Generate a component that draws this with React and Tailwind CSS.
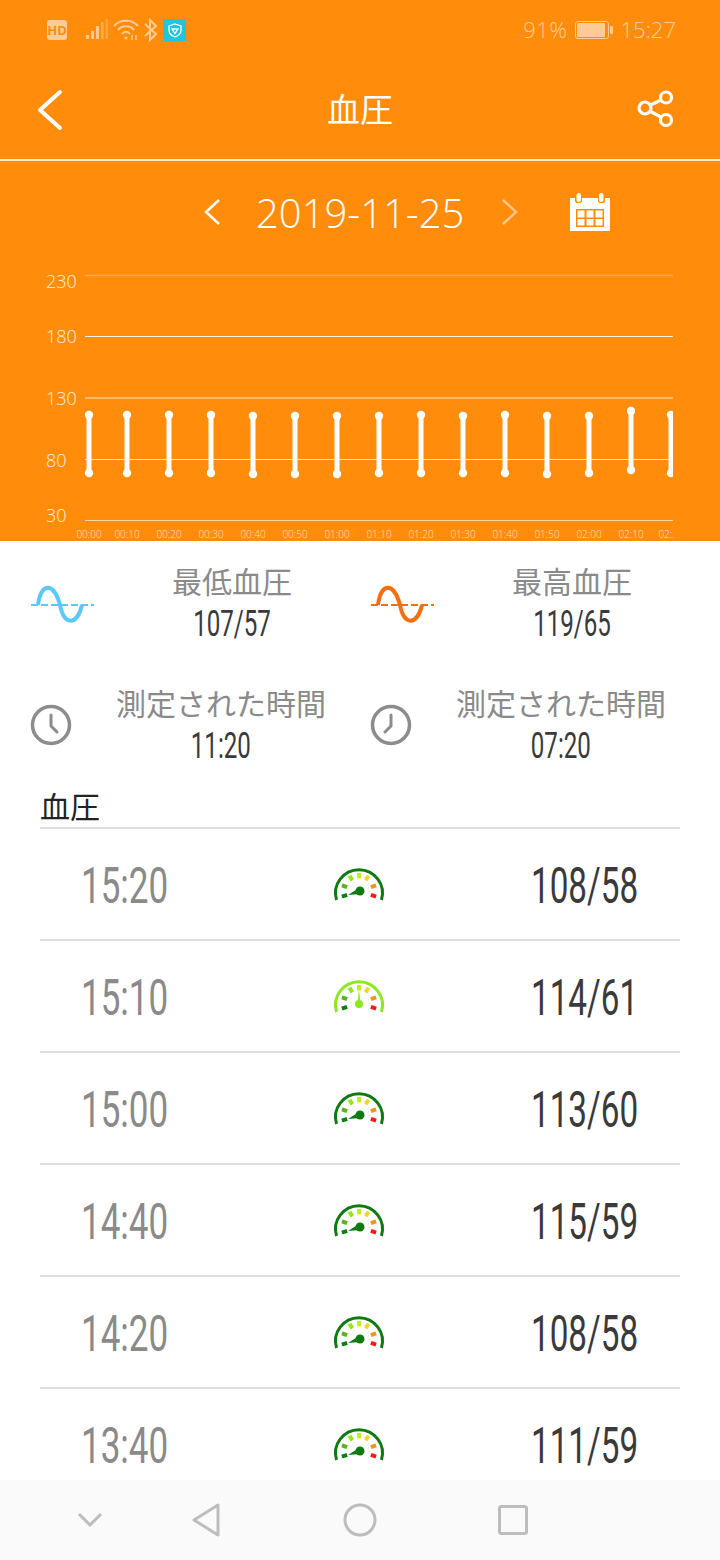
const rows = [
  { time: "15:20", value: "108/58", level: "low" },
  { time: "15:10", value: "114/61", level: "mid" },
  { time: "15:00", value: "113/60", level: "low" },
  { time: "14:40", value: "115/59", level: "low" },
  { time: "14:20", value: "108/58", level: "low" },
  { time: "13:40", value: "111/59", level: "low" },
]

const bars = [
  [89, 415, 473, "00:00"],
  [127, 415, 473, "00:10"],
  [169, 415, 473, "00:20"],
  [211, 415, 473, "00:30"],
  [253, 416, 474, "00:40"],
  [295, 416, 474, "00:50"],
  [337, 416, 474, "01:00"],
  [379, 416, 473, "01:10"],
  [421, 415, 473, "01:20"],
  [463, 416, 473, "01:30"],
  [505, 415, 473, "01:40"],
  [547, 416, 474, "01:50"],
  [589, 416, 473, "02:00"],
  [631, 411, 470, "02:10"],
  [671, 415, 473, "02:20"],
]

const tickColors = ["#0f7a12", "#4fb81e", "#8fe81e", "#c3ee1e", "#f5d51e", "#f5921e", "#ee1c1c"]
const tickAngles = [-108, -72, -32, 0, 32, 72, 108]

function Gauge({ level }) {
  const color = level === "mid" ? "#8de81e" : "#0f7a12"
  return (
    <svg width="50" height="36" viewBox="0 0 50 36" fill="none" className="block overflow-visible">
      <path d="M2.5 33 A23.5 23.5 0 1 1 47.5 33" stroke={color} strokeWidth="3" />
      {tickAngles.map((a, i) => (
        <line key={a} x1="25" y1="6" x2="25" y2="11.5" stroke={tickColors[i]} strokeWidth="4" transform={`rotate(${a} 25 24)`} />
      ))}
      {level === "mid" ? (
        <>
          <circle cx="25" cy="25" r="4" fill={color} />
          <path d="M23.5 25 L25 10 L26.5 25 Z" fill={color} />
        </>
      ) : (
        <>
          <circle cx="26" cy="24" r="4.5" fill={color} />
          <path d="M25 21 L14 28 L26 27 Z" fill={color} />
        </>
      )}
    </svg>
  )
}

function Wave({ color }) {
  return (
    <svg width="64" height="40" viewBox="0 0 64 40" fill="none" className="shrink-0 mt-1">
      <path d="M8 20 C11 -3 24 -3 30 20 C34 41 47 41 52 20" stroke={color} strokeWidth="4" />
      <path d="M1 20 H64" stroke={color} strokeWidth="2" strokeDasharray="7 3" />
    </svg>
  )
}

function Clock({ hands }) {
  return (
    <svg width="42" height="42" viewBox="0 0 42 42" fill="none" className="shrink-0">
      <circle cx="21" cy="21" r="18.5" stroke="#8c8c8c" strokeWidth="3.5" />
      <path d={hands} stroke="#8c8c8c" strokeWidth="3" strokeLinecap="round" strokeLinejoin="round" />
    </svg>
  )
}

function Cond({ children, className }) {
  return <span className={`inline-block whitespace-nowrap font-['Roboto',sans-serif] ${className}`}>{children}</span>
}

function Stat({ icon, label, value }) {
  return (
    <div className="flex items-center">
      {icon}
      <div className="flex-1 text-center">
        <div className="h-[42px] text-[30px] leading-[36px] text-[#8a8a8a] whitespace-nowrap">{label}</div>
        <div className="h-[40px] leading-[40px]">
          <Cond className="text-[36px] text-[#3a3a3a] scale-x-[0.67]">{value}</Cond>
        </div>
      </div>
    </div>
  )
}

function StatusBar() {
  return (
    <div className="h-[60px] flex items-center text-[#ffcb94] font-['Open_Sans',sans-serif] font-light text-[22px]">
      <div className="ml-[47px] w-[20px] h-[20px] rounded-[3px] bg-[#ffcb94] flex items-center justify-center text-[13px] font-bold text-[#ff8d0b] leading-none">HD</div>
      <svg width="24" height="24" viewBox="0 0 24 24" className="ml-[18px]" fill="#ffcb94">
        <rect x="1" y="17" width="3" height="4" />
        <rect x="6" y="13" width="3" height="8" />
        <rect x="11" y="8" width="3" height="13" />
        <rect x="16" y="4" width="2.5" height="17" opacity="0.5" />
        <rect x="20.5" y="1" width="2.5" height="20" opacity="0.4" />
      </svg>
      <svg width="26" height="24" viewBox="0 0 26 24" className="ml-[4px]" fill="none" stroke="#ffcb94" strokeWidth="2">
        <path d="M1 8 C7 1 19 1 25 8" />
        <path d="M5 12 C9 7 17 7 21 12" />
        <path d="M9 16 C11 13 15 13 17 16" />
        <circle cx="13" cy="20" r="1.5" fill="#ffcb94" stroke="none" />
        <path d="M19 17 V22 M23 17 V22" strokeWidth="1.5" />
      </svg>
      <svg width="14" height="24" viewBox="0 0 14 24" className="ml-[5px]" fill="none" stroke="#ffcb94" strokeWidth="2">
        <path d="M1 6 L12 16 L6 22 V2 L12 8 L1 18" />
      </svg>
      <div className="ml-[5px] w-[23px] h-[22px] bg-[#22c5dc] flex items-center justify-center">
        <svg width="14" height="15" viewBox="0 0 14 15" fill="none" stroke="#ffffff" strokeWidth="1.3">
          <path d="M7 1 L13 3 V7 C13 11 10 13 7 14 C4 13 1 11 1 7 V3 Z" />
          <path d="M4 6 H10 L7 10.5 Z" />
        </svg>
      </div>
      <span className="ml-auto tracking-[0.5px] pb-[2px]">91%</span>
      <svg width="38" height="20" viewBox="0 0 38 20" className="ml-[7px]" fill="none">
        <rect x="0.5" y="1.5" width="33" height="17" rx="2.5" stroke="#ffcb94" />
        <rect x="2" y="3" width="28" height="14" rx="1" fill="#ffcb94" />
        <rect x="35" y="6" width="3" height="8" rx="1" fill="#ffcb94" />
      </svg>
      <span className="ml-[8px] mr-[44px] pb-[2px]">15:27</span>
    </div>
  )
}

function Chart() {
  const lines = [
    [275.5, "#ffa94d", 1.5],
    [336.5, "#fff3e2", 1],
    [398, "#ffc98f", 1.5],
    [459.5, "#ffe4c4", 1],
    [520.5, "#ffd8aa", 1],
  ]
  const labels = [
    ["230", 46, 288],
    ["180", 46, 343],
    ["130", 46, 405],
    ["80", 46, 467],
    ["30", 46, 522],
  ]
  return (
    <svg width="720" height="279" viewBox="0 262 720 279" className="block" fontFamily="'Open Sans', sans-serif" fontWeight="300">
      {lines.map(([y, c, w]) => (
        <line key={y} x1="85" x2="673" y1={y} y2={y} stroke={c} strokeWidth={w} />
      ))}
      {labels.map(([t, x, y]) => (
        <text key={t} x={x} y={y} fontSize="18" fill="#ffeeda">{t}</text>
      ))}
      <svg x="0" y="262" width="673" height="279" viewBox="0 262 673 279">
        {bars.map(([x, top, bottom, t]) => (
          <g key={t}>
            <line x1={x} x2={x} y1={top} y2={bottom} stroke="#ffffff" strokeWidth="5" />
            <circle cx={x} cy={top} r="4.2" fill="#ffffff" />
            <circle cx={x} cy={bottom} r="4.2" fill="#ffffff" />
            <text x={x} y="538" fontSize="10" textAnchor="middle" fill="#ffe2bf">{t}</text>
          </g>
        ))}
      </svg>
    </svg>
  )
}

export default function App() {
  return (
    <div lang="ja" className="w-[720px] h-[1560px] overflow-hidden flex flex-col bg-white font-['Noto_Sans_CJK_JP',sans-serif]">
      <div className="bg-[#ff8d0b] h-[541px] shrink-0">
        <StatusBar />
        <div className="h-[99px] flex items-center relative border-b-2 border-[#ffe9cf] box-content">
          <svg width="28" height="42" viewBox="0 0 28 42" fill="none" className="ml-[36px]">
            <path d="M24 3 L4 21 L24 39" stroke="#ffffff" strokeWidth="4" strokeLinecap="round" strokeLinejoin="round" />
          </svg>
          <div className="absolute left-0 right-0 pb-[3px] text-center text-white text-[33px] leading-none">血圧</div>
          <svg width="38" height="38" viewBox="0 0 38 38" fill="none" stroke="#ffffff" strokeWidth="3.2" className="ml-auto mr-[45px] mb-[2px]">
            <circle cx="8" cy="18" r="6" />
            <circle cx="29" cy="7.5" r="5.5" />
            <circle cx="29" cy="30" r="5.5" />
            <path d="M13.5 15 L24 10 M13.5 21.5 L24 27" />
          </svg>
        </div>
        <div className="h-[101px] flex items-center font-['Open_Sans',sans-serif] font-light text-white">
          <svg width="16" height="28" viewBox="0 0 16 28" fill="none" className="ml-[204px]">
            <path d="M15 2 L2 14 L15 26" stroke="#ffffff" strokeWidth="2.5" />
          </svg>
          <div className="w-[206px] ml-[36px] pt-[3px] text-center text-[40px] leading-none whitespace-nowrap">2019-11-25</div>
          <svg width="16" height="28" viewBox="0 0 16 28" fill="none" className="ml-[40px]">
            <path d="M1 2 L14 14 L1 26" stroke="#ffc585" strokeWidth="2.5" />
          </svg>
          <svg width="40" height="38" viewBox="0 0 40 38" className="ml-[52px]" fill="#ffffff">
            <path fillRule="evenodd" d="M0 5 H5 V8 C5 11 12 11 12 8 V5 H28 V8 C28 11 35 11 35 8 V5 H40 V38 H0 Z M6 16 V34 H34 V16 Z" />
            <rect x="6.5" y="0" width="4.5" height="9" rx="2.2" />
            <rect x="29" y="0" width="4.5" height="9" rx="2.2" />
            <rect x="7.5" y="17.5" width="7" height="7" />
            <rect x="16.5" y="17.5" width="7" height="7" />
            <rect x="25.5" y="17.5" width="7" height="7" />
            <rect x="7.5" y="26" width="7" height="6.5" />
            <rect x="16.5" y="26" width="7" height="6.5" />
            <rect x="25.5" y="26" width="7" height="6.5" />
          </svg>
        </div>
        <Chart />
      </div>

      <div className="flex-1 min-h-0 overflow-hidden">
        <div className="px-[30px] pt-[21px] grid grid-cols-[340px_340px] gap-y-[40px]">
          <Stat icon={<Wave color="#5cc8fa" />} label="最低血圧" value="107/57" />
          <Stat icon={<Wave color="#f36f0f" />} label="最高血圧" value="119/65" />
          <Stat icon={<Clock hands="M21 11 V22 L27 28" />} label="測定された時間" value="11:20" />
          <Stat icon={<Clock hands="M21 11 V22 L15 28" />} label="測定された時間" value="07:20" />
        </div>
        <div className="mx-[40px] mt-[21px] h-[40px] text-[30px] leading-[36px] text-[#222222]">血圧</div>
        <div className="mx-[40px]">
          {rows.map((r) => (
            <div key={r.time} className="h-[112px] border-t-2 border-[#dedede] grid grid-cols-[294px_197px_1fr] items-center">
              <div className="pl-[41px] mt-[3px]">
                <Cond className="text-[50px] leading-none text-[#8a8a8a] origin-left scale-x-[0.7]">{r.time}</Cond>
              </div>
              <div className="mt-[1px]"><Gauge level={r.level} /></div>
              <div className="mt-[3px]">
                <Cond className="text-[50px] leading-none text-[#3a3a3a] origin-left scale-x-[0.665]">{r.value}</Cond>
              </div>
            </div>
          ))}
        </div>
      </div>

      <div className="h-[80px] shrink-0 bg-[#fafafa] flex items-center">
        <svg width="26" height="16" viewBox="0 0 26 16" fill="none" className="ml-[77px]">
          <path d="M2 2 L13 13 L24 2" stroke="#bdbdbd" strokeWidth="3" />
        </svg>
        <svg width="30" height="34" viewBox="0 0 30 34" fill="none" className="ml-[88px]">
          <path d="M27 2 V32 L3 17 Z" stroke="#bdbdbd" strokeWidth="3" strokeLinejoin="round" />
        </svg>
        <svg width="34" height="34" viewBox="0 0 34 34" fill="none" className="ml-[122px]">
          <circle cx="17" cy="17" r="15" stroke="#bdbdbd" strokeWidth="3" />
        </svg>
        <svg width="30" height="30" viewBox="0 0 30 30" fill="none" className="ml-[121px]">
          <rect x="1.5" y="1.5" width="27" height="27" rx="2" stroke="#bdbdbd" strokeWidth="3" />
        </svg>
      </div>
    </div>
  )
}
